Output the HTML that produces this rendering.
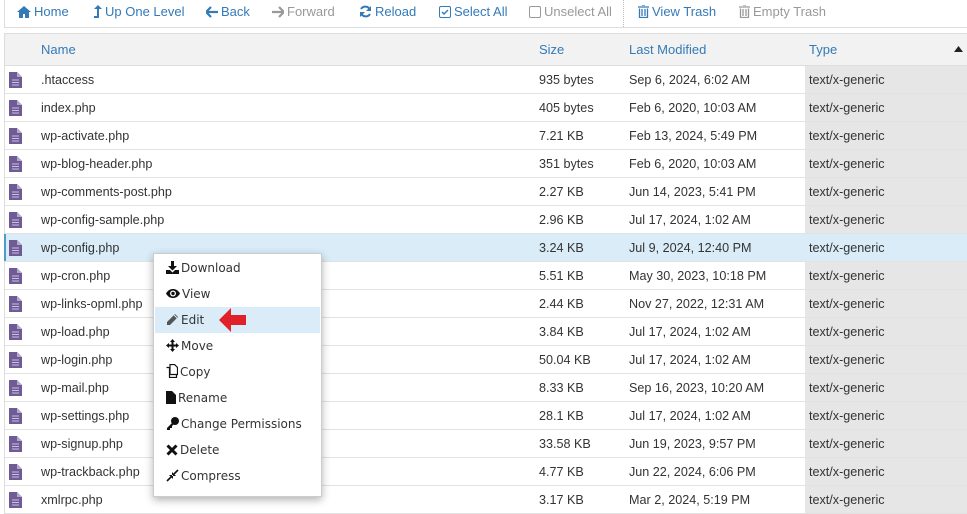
<!DOCTYPE html>
<html><head><meta charset="utf-8"><style>
*{box-sizing:border-box;margin:0;padding:0}
body{width:967px;height:509px;overflow:hidden;background:#fff;font-family:"Liberation Sans",Arial,sans-serif;font-size:12.6px;color:#333;position:relative}
.tb{position:absolute;left:4px;top:0;width:963px;height:28px;border-left:1px solid #ddd;border-bottom:1px solid #ddd}
.tb span{position:absolute;top:4px;font-size:13px;color:#337ab7;white-space:nowrap}
.tb span.d{color:#999}
.tb svg{vertical-align:-2px;margin-right:3px}
.sep{position:absolute;left:623px;top:0;height:27px;border-left:1px dotted #bbb}
.tbl{position:absolute;left:4px;top:33px;width:963px;border-top:1px solid #ddd;border-left:1px solid #ddd}
.hd{height:32px;background:#f2f2f2;border-bottom:1px solid #ddd;position:relative;color:#337ab7;font-size:13px}
.hd span{position:absolute;top:8px}
.row{height:28px;border-bottom:1px solid #e2e2e2;position:relative}
.row span{position:absolute;top:7px}
.row .ty{position:absolute;left:800px;top:0;bottom:0;right:0;background:#e6e6e6}
.row .ty span{left:4px}
.row.sel{background:#d9ecf8}
.row.sel .ty{background:#d9ecf8}
.row.sel:before{content:"";position:absolute;left:-1px;top:0;bottom:0;width:2px;background:#4a9fc9}
.ic{position:absolute;left:4px;top:6px}
.menu{position:absolute;left:153px;top:253px;width:169px;height:244px;background:#fff;border:1px solid #ccc;box-shadow:0 3px 8px rgba(0,0,0,.3);font-family:"DejaVu Sans","Liberation Sans",sans-serif;font-size:12px;color:#333}
.mi{position:absolute;left:1px;right:1px;height:26px;line-height:26px;padding-left:11px;white-space:nowrap}
.mi.h{background:#d9ecf8}
.mi svg{vertical-align:-2px;margin-right:2px}
</style></head><body>
<div class="tb">
<span style="left:12px"><svg width="14" height="12" viewBox="0 0 14 12"><path d="M7 0L0 6h2v6h4V8h2v4h4V6h2z" fill="#337ab7"/></svg>Home</span>
<span style="left:88px"><svg width="9" height="13" viewBox="0 0 9 13"><path d="M5 0L9 4H6v9H1v-2h3V4H1z" fill="#337ab7"/></svg>Up One Level</span>
<span style="left:201px"><svg width="12" height="12" viewBox="0 0 12 12"><path d="M5 1L0 6l5 5M0 6h12" stroke="#337ab7" stroke-width="2.2" fill="none"/></svg>Back</span>
<span style="left:267px" class="d"><svg width="12" height="12" viewBox="0 0 12 12"><path d="M7 1l5 5-5 5M12 6H0" stroke="#999" stroke-width="2.2" fill="none"/></svg>Forward</span>
<span style="left:354px"><svg width="13" height="13" viewBox="0 0 13 13"><path d="M11 5A5 5 0 0 0 2 4M2 8a5 5 0 0 0 9 1" stroke="#337ab7" stroke-width="2" fill="none"/><path d="M12 1v5H7zM1 12V7h5z" fill="#337ab7"/></svg>Reload</span>
<span style="left:434px"><svg width="12" height="12" viewBox="0 0 12 12"><rect x=".5" y=".5" width="11" height="11" rx="1.5" fill="none" stroke="#337ab7"/><path d="M3 6l2 2 4-4" stroke="#337ab7" stroke-width="1.4" fill="none"/></svg>Select All</span>
<span style="left:524px" class="d"><svg width="12" height="12" viewBox="0 0 12 12"><rect x=".5" y=".5" width="11" height="11" rx="1.5" fill="none" stroke="#999"/></svg>Unselect All</span>
<span style="left:633px"><svg width="11" height="13" viewBox="0 0 11 13"><path d="M0 2h11M4 0h3M1.5 3.5v9h8v-9M4 4v7M7 4v7" stroke="#337ab7" stroke-width="1.3" fill="none"/></svg>View Trash</span>
<span style="left:734px" class="d"><svg width="11" height="13" viewBox="0 0 11 13"><path d="M0 2h11M4 0h3M1.5 3.5v9h8v-9M4 4v7M7 4v7" stroke="#999" stroke-width="1.3" fill="none"/></svg>Empty Trash</span>
</div>
<div class="sep"></div>
<div class="tbl">
<div class="hd"><span style="left:36px">Name</span><span style="left:534px">Size</span><span style="left:624px">Last Modified</span><span style="left:804px">Type</span><svg style="position:absolute;left:949px;top:12px" width="9" height="6" viewBox="0 0 9 6"><path d="M0 6L4.5 0 9 6z" fill="#222"/></svg></div>
<div id="rows"></div>
</div>
<div class="menu">
<div class="mi" style="top:1px"><svg width="13" height="13" viewBox="0 0 13 13"><path d="M5 0h3v5h3L6.5 9.5 2 5h3z" fill="#111"/><path d="M0 9h4l2.5 2.5L9 9h4v4H0z" fill="#111"/></svg>Download</div>
<div class="mi" style="top:27px"><svg width="14" height="13" viewBox="0 0 14 13"><path d="M0 6.5C2 3 4.5 2 7 2s5 1 7 4.5C12 10 9.5 11 7 11S2 10 0 6.5z" fill="#111"/><circle cx="7" cy="6.5" r="3" fill="#fff"/><circle cx="7" cy="6.5" r="1.7" fill="#111"/></svg>View</div>
<div class="mi h" style="top:53px"><svg width="13" height="13" viewBox="0 0 13 13"><path d="M9 1l3 3-8 8H1V9z" fill="#555"/><path d="M8 2l3 3" stroke="#d9ecf8" stroke-width="1"/></svg>Edit</div>
<div class="mi" style="top:79px"><svg width="13" height="13" viewBox="0 0 13 13"><path d="M6.5 0L9 3H7.5v2.5H10V4l3 2.5L10 9V7.5H7.5V10H9l-2.5 3L4 10h1.5V7.5H3V9L0 6.5 3 4v1.5h2.5V3H4z" fill="#111"/></svg>Move</div>
<div class="mi" style="top:105px"><svg width="12" height="14" viewBox="0 0 12 14"><path d="M4 .5h4.5l3 3v7H4z M.5 3.5h3v10h7v-3" fill="none" stroke="#111" stroke-width="1.2"/></svg>Copy</div>
<div class="mi" style="top:131px"><svg width="10" height="13" viewBox="0 0 10 13"><path d="M0 0h6l4 4v9H0z" fill="#111"/></svg>Rename</div>
<div class="mi" style="top:157px"><svg width="13" height="13" viewBox="0 0 13 13"><circle cx="9" cy="4" r="4" fill="#111"/><path d="M7 5L1 11v2h3v-2h2V9l3-3z" fill="#111"/></svg>Change Permissions</div>
<div class="mi" style="top:183px"><svg width="12" height="12" viewBox="0 0 12 12"><path d="M1.5 1.5l9 9M10.5 1.5l-9 9" stroke="#111" stroke-width="3"/></svg>Delete</div>
<div class="mi" style="top:209px"><svg width="13" height="13" viewBox="0 0 13 13"><path d="M12 1L8 5M1 12l4-4" stroke="#111" stroke-width="1.6"/><path d="M6 3v4h4zM3 6h4v4z" fill="#111"/></svg>Compress</div>
</div>
<svg style="position:absolute;left:218px;top:307px" width="30" height="26" viewBox="0 0 30 26"><path d="M1 13L13 1v7h15v10H13v7z" fill="#e0202a"/></svg>
<script>
var d=[[".htaccess","935 bytes","Sep 6, 2024, 6:02 AM"],["index.php","405 bytes","Feb 6, 2020, 10:03 AM"],["wp-activate.php","7.21 KB","Feb 13, 2024, 5:49 PM"],["wp-blog-header.php","351 bytes","Feb 6, 2020, 10:03 AM"],["wp-comments-post.php","2.27 KB","Jun 14, 2023, 5:41 PM"],["wp-config-sample.php","2.96 KB","Jul 17, 2024, 1:02 AM"],["wp-config.php","3.24 KB","Jul 9, 2024, 12:40 PM"],["wp-cron.php","5.51 KB","May 30, 2023, 10:18 PM"],["wp-links-opml.php","2.44 KB","Nov 27, 2022, 12:31 AM"],["wp-load.php","3.84 KB","Jul 17, 2024, 1:02 AM"],["wp-login.php","50.04 KB","Jul 17, 2024, 1:02 AM"],["wp-mail.php","8.33 KB","Sep 16, 2023, 10:20 AM"],["wp-settings.php","28.1 KB","Jul 17, 2024, 1:02 AM"],["wp-signup.php","33.58 KB","Jun 19, 2023, 9:57 PM"],["wp-trackback.php","4.77 KB","Jun 22, 2024, 6:06 PM"],["xmlrpc.php","3.17 KB","Mar 2, 2024, 5:19 PM"]];
var ic='<svg class="ic" width="13" height="16" viewBox="0 0 13 16"><path d="M0 0h8l5 5v11H0z" fill="#6f5b96"/><path d="M8 0v5h5" fill="#b3a7cc"/><path d="M3 8h7M3 10.5h7M3 13h7" stroke="#c9bfe0" stroke-width="1"/></svg>';
var h='';d.forEach(function(r,i){h+='<div class="row'+(i==6?' sel':'')+'">'+ic+'<div class="ty"><span>text/x-generic</span></div><span style="left:36px">'+r[0]+'</span><span style="left:534px">'+r[1]+'</span><span style="left:624px">'+r[2]+'</span></div>'});
document.getElementById('rows').innerHTML=h;
</script>
</body></html>
